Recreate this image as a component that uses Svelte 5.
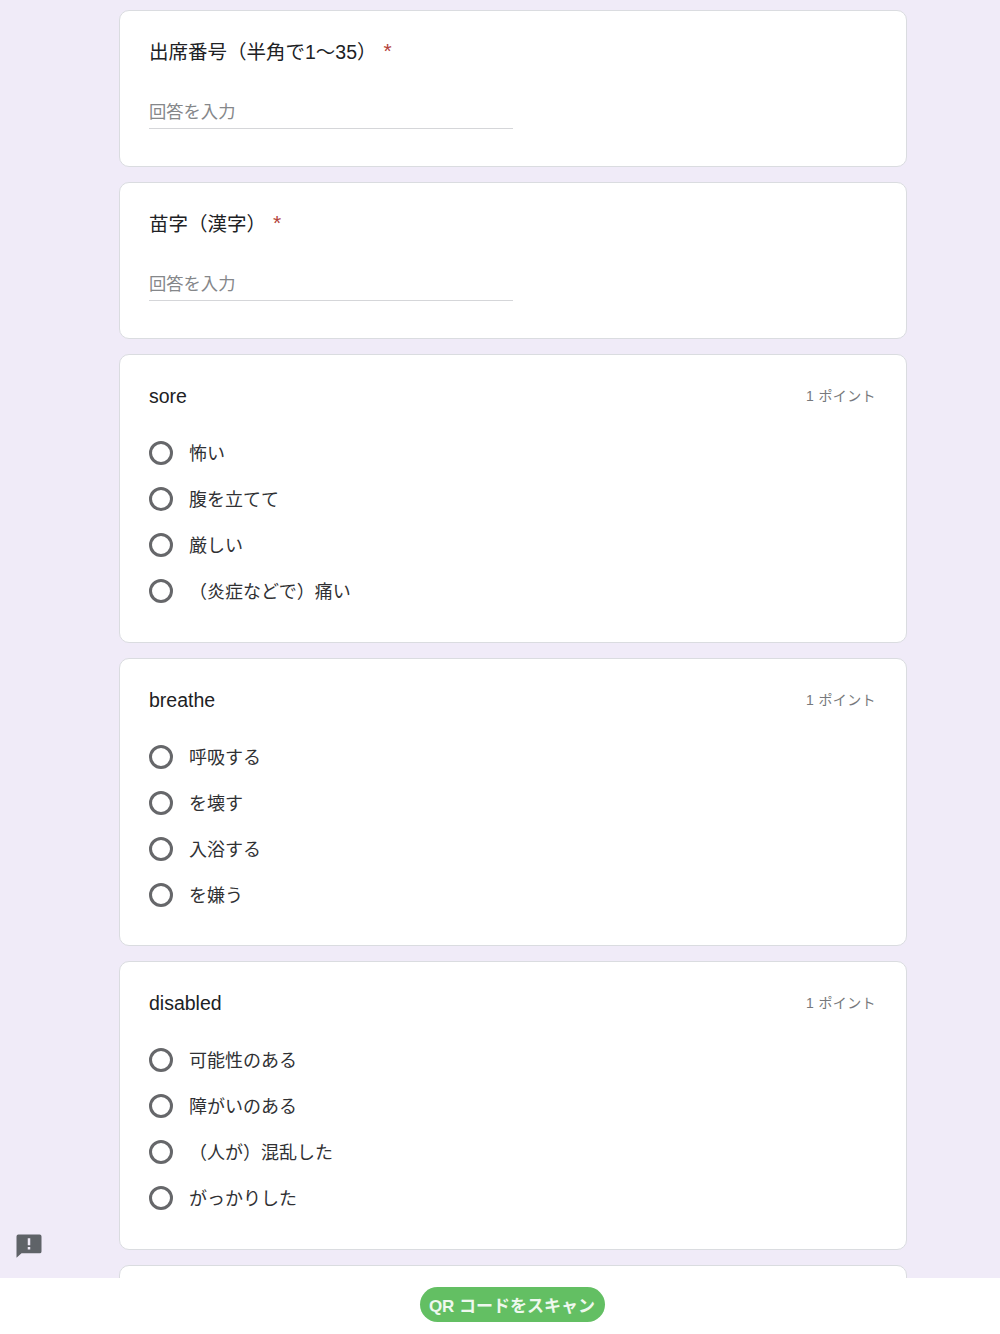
<script>
	const textQuestions = ['出席番号（半角で1〜35）', '苗字（漢字）'];
	const choiceQuestions = [
		{ title: 'sore', options: ['怖い', '腹を立てて', '厳しい', '（炎症などで）痛い'] },
		{ title: 'breathe', options: ['呼吸する', 'を壊す', '入浴する', 'を嫌う'] },
		{ title: 'disabled', options: ['可能性のある', '障がいのある', '（人が）混乱した', 'がっかりした'] }
	];
</script>

<div class="page">
	<main class="form">
		{#each textQuestions as question}
			<section class="card text-card">
				<h2 class="title">{question}<span class="required">*</span></h2>
				<div class="answer">回答を入力</div>
			</section>
		{/each}

		{#each choiceQuestions as question}
			<section class="card choice-card">
				<div class="head">
					<h2 class="title">{question.title}</h2>
					<span class="points">1 ポイント</span>
				</div>
				<ul class="options">
					{#each question.options as option}
						<li class="option">
							<span class="radio"></span>
							<span>{option}</span>
						</li>
					{/each}
				</ul>
			</section>
		{/each}

		<section class="card"></section>

		<svg class="report" viewBox="0 0 24 24" width="30" height="30" aria-hidden="true">
			<path d="M3.5 2h17A1.5 1.5 0 0 1 22 3.5v12a1.5 1.5 0 0 1-1.5 1.5H6l-4 3.6V3.500A1.500 1.500 0 0 1 3.500 2zM11 10.500h2V5h-2zM11 14h2v-2h-2z" fill-rule="evenodd" />
		</svg>
	</main>

	<footer class="bar">
		<button class="scan">QR コードをスキャン</button>
	</footer>
</div>

<style>
	:global(body) {
		font-family: 'Liberation Sans', 'Noto Sans CJK JP', sans-serif;
		color: #202124;
	}

	.page {
		display: flex;
		flex-direction: column;
		height: 1334px;
		overflow: hidden;
		background: #f0ebf8;
	}

	.form {
		position: relative;
		flex: 1;
		min-height: 0;
		overflow: hidden;
		display: flex;
		flex-direction: column;
		gap: 15px;
		padding: 10px 93px 0 119px;
	}

	.card {
		flex: none;
		box-sizing: border-box;
		background: #fff;
		border: 1px solid #dadce0;
		border-radius: 10px;
		padding: 0 30px 0 29px;
		min-height: 40px;
	}

	.text-card {
		height: 157px;
		padding-top: 29px;
	}

	.choice-card {
		height: 288.5px;
		padding-top: 29px;
	}

	.title {
		margin: 0;
		font-size: 19.5px;
		font-weight: 400;
		line-height: 24px;
	}

	.required {
		margin-left: 7px;
		color: #b3423a;
		font-size: 21px;
		line-height: 20px;
		vertical-align: 1px;
	}

	.answer {
		width: 364px;
		margin-top: 36px;
		padding-bottom: 4px;
		border-bottom: 1px solid #d5d6d9;
		color: #85878a;
		font-size: 17.3px;
		line-height: 24px;
	}

	.head {
		display: flex;
		justify-content: space-between;
		align-items: center;
	}

	.points {
		color: #77797c;
		font-size: 14px;
		letter-spacing: 0.4px;
		margin-top: -2px;
	}

	.options {
		list-style: none;
		margin: 31px 0 0;
		padding: 0;
		display: flex;
		flex-direction: column;
		gap: 20px;
	}

	.option {
		display: flex;
		align-items: center;
		gap: 16px;
		height: 26px;
		font-size: 18px;
		color: #303134;
	}

	.radio {
		box-sizing: border-box;
		width: 24px;
		height: 24px;
		margin-top: 2px;
		border: 3px solid #66676a;
		border-radius: 50%;
	}

	.report {
		position: absolute;
		left: 13.5px;
		bottom: 16.5px;
		fill: #5f6368;
	}

	.bar {
		flex: none;
		height: 56px;
		display: flex;
		justify-content: center;
		padding: 9px 0 0 24px;
		box-sizing: border-box;
		background: #fff;
	}

	.scan {
		height: 35px;
		width: 185px;
		border: none;
		border-radius: 18px;
		background: #63bf63;
		color: #eef8ee;
		font: 700 17px 'Liberation Sans', 'Noto Sans CJK JP', sans-serif;
		padding: 0;
	}
</style>
